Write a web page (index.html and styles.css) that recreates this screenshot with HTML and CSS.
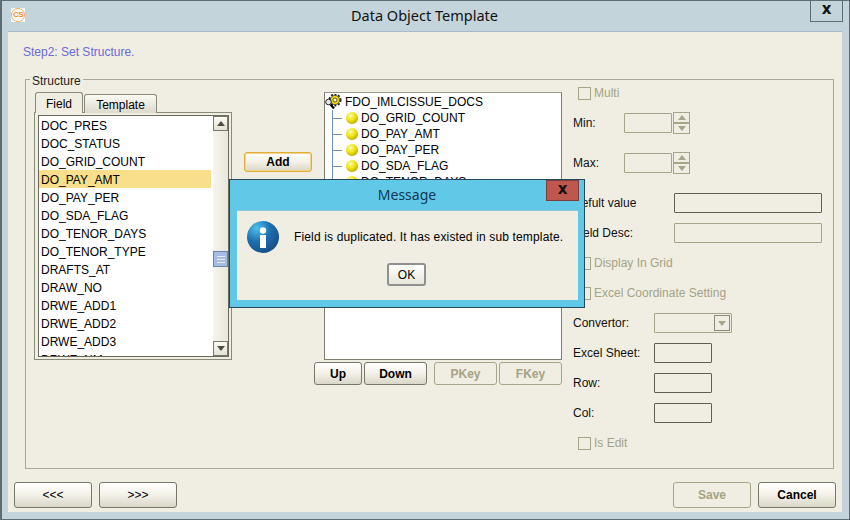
FILE: index.html
```html
<!DOCTYPE html>
<html>
<head>
    <meta charset="utf-8">
    <title>Data Object Template</title>
    <link rel="stylesheet" href="styles.css">
</head>
<body>
    <div class="window">
        <div class="titlebar">
            <span class="logo"><span class="logo-ring">CS</span></span>
            <span class="title">Data Object Template</span>
            <a href="javascript:;" class="close">x</a>
        </div>
        <div class="content">
            <div class="step">Step2: Set Structure.</div>
            <fieldset class="structure">
                <legend><span>Structure</span></legend>
                <div class="columns">
                    <div class="col-fields">
                        <div class="tabs">
                            <span class="tab active">Field</span>
                            <span class="tab">Template</span>
                        </div>
                        <div class="list-frame">
                            <div class="list-inner">
                                <ul class="list">
                                    <li>DOC_PRES</li>
                                    <li>DOC_STATUS</li>
                                    <li>DO_GRID_COUNT</li>
                                    <li class="active">DO_PAY_AMT</li>
                                    <li>DO_PAY_PER</li>
                                    <li>DO_SDA_FLAG</li>
                                    <li>DO_TENOR_DAYS</li>
                                    <li>DO_TENOR_TYPE</li>
                                    <li>DRAFTS_AT</li>
                                    <li>DRAW_NO</li>
                                    <li>DRWE_ADD1</li>
                                    <li>DRWE_ADD2</li>
                                    <li>DRWE_ADD3</li>
                                    <li>DRWE_NM</li>
                                </ul>
                                <div class="scrollbar">
                                    <span class="scroll-btn"><i class="arrow-up"></i></span>
                                    <span class="thumb"><i></i><i></i><i></i></span>
                                    <span class="scroll-btn bottom"><i class="arrow-down"></i></span>
                                </div>
                            </div>
                        </div>
                    </div>
                    <div class="col-add">
                        <button class="btn add">Add</button>
                    </div>
                    <div class="col-tree">
                        <div class="tree">
                            <div class="tree-root">
                                <svg class="gear" width="18" height="16" viewBox="0 0 18 16">
                                    <circle cx="10" cy="6" r="5.6" fill="none" stroke="#222" stroke-width="1.8" stroke-dasharray="2 1.6"/>
                                    <circle cx="10" cy="6" r="4.6" fill="#f4d800" stroke="#3a3a10" stroke-width="0.8"/>
                                    <circle cx="10" cy="6" r="2" fill="#fffbe0" stroke="#333" stroke-width="0.8"/>
                                    <path d="M5.5 10.5l3.5 4" stroke="#000" stroke-width="2.2"/>
                                    <circle cx="3.5" cy="8" r="2.8" fill="#e4ebee" stroke="#222"/>
                                </svg>
                                <span>FDO_IMLCISSUE_DOCS</span>
                            </div>
                            <div class="tree-children">
                                <div class="node"><i class="branch"></i><i class="ball"></i>DO_GRID_COUNT</div>
                                <div class="node"><i class="branch"></i><i class="ball"></i>DO_PAY_AMT</div>
                                <div class="node"><i class="branch"></i><i class="ball"></i>DO_PAY_PER</div>
                                <div class="node"><i class="branch"></i><i class="ball"></i>DO_SDA_FLAG</div>
                                <div class="node"><i class="branch"></i><i class="ball"></i>DO_TENOR_DAYS</div>
                            </div>
                        </div>
                        <div class="tree-actions">
                            <button class="btn up">Up</button>
                            <button class="btn down">Down</button>
                            <button class="btn key off">PKey</button>
                            <button class="btn key off">FKey</button>
                        </div>
                    </div>
                    <div class="col-props">
                        <label class="row check off"><i class="box"></i>Multi</label>
                        <div class="row">
                            <span class="lbl w51">Min:</span>
                            <span class="field off w48"></span>
                            <span class="spinner"><i><b class="arrow-up"></b></i><i><b class="arrow-down"></b></i></span>
                        </div>
                        <div class="row far">
                            <span class="lbl w51">Max:</span>
                            <span class="field off w48"></span>
                            <span class="spinner"><i><b class="arrow-up"></b></i><i><b class="arrow-down"></b></i></span>
                        </div>
                        <div class="row far">
                            <span class="lbl w101">Defult value</span>
                            <span class="field w148"></span>
                        </div>
                        <div class="row">
                            <span class="lbl w101">Field Desc:</span>
                            <span class="field off w148"></span>
                        </div>
                        <label class="row check off"><i class="box"></i>Display In Grid</label>
                        <label class="row check off"><i class="box"></i>Excel Coordinate Setting</label>
                        <div class="row">
                            <span class="lbl w81">Convertor:</span>
                            <span class="field off combo"><i><b class="arrow-down"></b></i></span>
                        </div>
                        <div class="row">
                            <span class="lbl w81">Excel Sheet:</span>
                            <span class="field w58"></span>
                        </div>
                        <div class="row">
                            <span class="lbl w81">Row:</span>
                            <span class="field w58"></span>
                        </div>
                        <div class="row">
                            <span class="lbl w81">Col:</span>
                            <span class="field w58"></span>
                        </div>
                        <label class="row check off"><i class="box"></i>Is Edit</label>
                    </div>
                </div>
            </fieldset>
            <div class="footer">
                <button class="btn nav plain">&lt;&lt;&lt;</button>
                <button class="btn nav plain">&gt;&gt;&gt;</button>
                <span class="spacer"></span>
                <button class="btn nav off">Save</button>
                <button class="btn nav cancel">Cancel</button>
            </div>
        </div>

        <!-- message box -->
        <div class="dialog">
            <div class="dialog-head">
                <span>Message</span>
                <a href="javascript:;" class="dialog-close">x</a>
            </div>
            <div class="dialog-body">
                <div class="dialog-msg">
                    <svg width="32" height="32" viewBox="0 0 32 32">
                        <defs>
                            <radialGradient id="infoFill" cx="30%" cy="22%" r="85%">
                                <stop offset="0" stop-color="#4cc0ee"/>
                                <stop offset="0.5" stop-color="#1f6fae"/>
                                <stop offset="1" stop-color="#154e86"/>
                            </radialGradient>
                        </defs>
                        <circle cx="16" cy="16" r="16" fill="url(#infoFill)"/>
                        <circle cx="16" cy="9.5" r="3.2" fill="#fff"/>
                        <rect x="13" y="14" width="6" height="13" fill="#fff"/>
                    </svg>
                    <span>Field is duplicated. It has existed in sub template.</span>
                </div>
                <button class="ok">OK</button>
            </div>
        </div>
    </div>
</body>
</html>
```
FILE: styles.css
```css
* {
    margin: 0;
    padding: 0;
    box-sizing: border-box;
    list-style: none;
}
body {
    width: 850px;
    height: 520px;
    overflow: hidden;
    font: 12px "Liberation Sans", Arial, sans-serif;
    color: #000;
}
i {
    font-style: normal;
    display: block;
}
.window {
    position: relative;
    width: 850px;
    height: 520px;
    display: flex;
    flex-direction: column;
    background: #c3d5db;
    border: 1px solid #5f6b75;
    border-width: 1px 1px 1px 2px;
}

/* title */
.titlebar {
    position: relative;
    height: 30px;
    flex: none;
    display: flex;
    align-items: center;
    justify-content: center;
    padding: 0 2px 2px 0;
}
.title {
    font: 14.5px "Noto Sans", sans-serif;
    color: #111;
}
.logo {
    position: absolute;
    left: 9px;
    top: 7px;
    width: 14px;
    height: 14px;
    background: #fff;
}
.logo-ring {
    display: block;
    width: 14px;
    height: 14px;
    border: 1.5px solid #f4a657;
    border-radius: 50%;
    color: #f08a24;
    font: bold 8px/11px "Liberation Sans", sans-serif;
    letter-spacing: -.5px;
    text-align: center;
}
.close {
    position: absolute;
    right: 6px;
    top: -1px;
    width: 33px;
    height: 22px;
    border: 1px solid #5f6b75;
    border-top: 0;
    color: #111;
    font: bold 15px/18px "DejaVu Sans", sans-serif;
    text-align: center;
    text-decoration: none;
}

/* body of the window */
.content {
    flex: 1;
    margin: 0 7px 7px 6px;
    padding: 0 8px 0 17px;
    display: flex;
    flex-direction: column;
    background: #f0eee2;
    border-top: 1px solid #a9b8cc;
}
.step {
    height: 26px;
    margin-left: -2px;
    padding-top: 13px;
    line-height: 14px;
    color: #6a6ad8;
}
.structure {
    height: 397px;
    margin-top: 14px;
    padding: 0 8px;
    border: 1px solid #a8a89a;
    min-width: 0;
}
.structure legend {
    margin-left: -4px;
    padding: 0 2px;
    line-height: 14px;
    color: #222;
}
.structure legend span {
    position: relative;
    top: 2px;
}
.columns {
    display: flex;
    margin-top: -1px;
}
.col-fields {
    width: 198px;
    margin-top: 7px;
}
.col-add {
    width: 68px;
    margin: 67px 12px 0;
}
.col-tree {
    width: 238px;
    margin: 7px 11px 0 0;
}
.col-props {
    flex: 1;
    display: flex;
    flex-direction: column;
    gap: 10px;
    margin-top: -2px;
}

/* tabs */
.tabs {
    display: flex;
    align-items: flex-end;
    height: 21px;
    margin: 0 0 -1px 1px;
    position: relative;
}
.tab {
    height: 19px;
    width: 73px;
    margin-left: 1px;
    border: 1px solid #8a8a78;
    border-bottom: 0;
    border-radius: 3px 3px 0 0;
    background: linear-gradient(#fbfaf5, #dcdacb);
    text-align: center;
    line-height: 20px;
}
.tab.active {
    height: 21px;
    width: 48px;
    margin-left: 0;
    background: #f0eee2;
    line-height: 22px;
}

/* field list */
.list-frame {
    height: 248px;
    padding: 2px 2px 2px 3px;
    border: 1px solid #8a8a78;
}
.list-inner {
    height: 100%;
    display: flex;
    overflow: hidden;
    background: #fff;
    border: 1px solid #6b6b5d;
}
.list {
    flex: 1;
    padding: 0;
    overflow: hidden;
}
.list li {
    height: 18px;
    line-height: 20px;
    padding-left: 2px;
    margin-right: 2px;
}
.list li.active {
    background: #f9df8c;
}
.scrollbar {
    width: 15px;
    display: flex;
    flex-direction: column;
    background: linear-gradient(90deg, #f6f5ee, #e9e7da);
}
.scroll-btn {
    height: 15px;
    display: flex;
    align-items: center;
    justify-content: center;
    border: 1px solid #77776a;
    background: linear-gradient(#fbfaf5, #e4e2d4);
}
.scroll-btn.bottom {
    margin-top: auto;
}
.thumb {
    height: 16px;
    margin-top: 120px;
    display: flex;
    flex-direction: column;
    align-items: center;
    justify-content: center;
    gap: 2px;
    border: 1px solid #6f83a8;
    background: #a3bde4;
}
.thumb i {
    width: 8px;
    height: 1px;
    background: #e6eefa;
}
.arrow-up, .arrow-down {
    display: block;
    width: 0;
    height: 0;
    border-left: 4px solid transparent;
    border-right: 4px solid transparent;
}
.arrow-up {
    border-bottom: 5px solid #4d4d42;
}
.arrow-down {
    border-top: 5px solid #4d4d42;
}

/* buttons */
.btn {
    font: bold 12px "Liberation Sans", sans-serif;
    color: #000;
    border: 1px solid #77776a;
    border-radius: 3px;
    background: linear-gradient(#ffffff, #f3f1e8 50%, #d9d7c7);
}
.btn.off {
    color: #a3a385;
    border-color: #a5a588;
    background: #f0eee2;
}
.btn.add {
    width: 68px;
    height: 20px;
    border-color: #e0ac3a;
    box-shadow: inset 0 0 0 1px #f3d488;
}
.btn.plain {
    font-weight: normal;
}
.tree-actions {
    display: flex;
    margin: 2px 0 0 -10px;
}
.tree-actions .btn {
    flex: none;
    height: 23px;
}
.up {
    width: 48px;
    margin-right: 2px;
}
.down {
    width: 63px;
    margin-right: 7px;
}
.key {
    width: 63px;
}
.key + .key {
    margin-left: 2px;
}

/* tree */
.tree {
    height: 268px;
    padding-top: 1px;
    background: #fff;
    border: 1px solid #7f7f70;
    border-top-color: #9a9a8c;
    overflow: hidden;
}
.tree-root {
    height: 16px;
    display: flex;
    align-items: center;
    gap: 2px;
}
.gear {
    flex: none;
}
.tree-children {
    margin-left: 7px;
    padding-bottom: 90px;
    border-left: 1px solid #6f8fb5;
}
.node {
    height: 16px;
    display: flex;
    align-items: center;
}
.branch {
    width: 9px;
    height: 1px;
    background: #6f8fb5;
}
.ball {
    width: 12px;
    height: 12px;
    margin: 0 3px 0 4px;
    border-radius: 50%;
    background: radial-gradient(circle at 38% 32%, #fffbb0, #eee000 45%, #8f8500);
}

/* property column */
.row {
    height: 20px;
    display: flex;
    align-items: center;
    flex: none;
}
.row.far {
    margin-top: 10px;
}
.lbl {
    flex: none;
    color: #111;
}
.w51 { width: 51px; }
.w81 { width: 81px; }
.w101 { width: 101px; }
.field {
    display: block;
    height: 20px;
    border: 1px solid #5f5f52;
    border-radius: 1px;
}
.field.off {
    border-color: #a5a588;
}
.w48 { width: 48px; }
.w58 { width: 58px; }
.w148 { width: 148px; }
.spinner {
    margin-left: 1px;
    width: 17px;
    display: flex;
    flex-direction: column;
}
.spinner i {
    height: 11px;
    display: flex;
    align-items: center;
    justify-content: center;
    border: 1px solid #a5a588;
}
.spinner b, .combo b {
    border-left-width: 4px;
    border-right-width: 4px;
    border-top-color: #a5a588;
    border-bottom-color: #a5a588;
}
.combo {
    width: 78px;
    display: flex;
    justify-content: flex-end;
    align-items: center;
    padding-right: 1px;
}
.combo i {
    width: 16px;
    height: 16px;
    display: flex;
    align-items: center;
    justify-content: center;
    border: 1px solid #8a8a78;
}
.check {
    padding-left: 5px;
    gap: 3px;
}
.check.off {
    color: #a3a385;
}
.box {
    width: 13px;
    height: 13px;
    border: 1px solid #a5a588;
}

/* bottom buttons */
.footer {
    display: flex;
    gap: 7px;
    margin: 13px -2px 0 -11px;
}
.nav {
    width: 78px;
    height: 26px;
}
.spacer {
    flex: 1;
}

/* message box */
.dialog {
    position: absolute;
    left: 227px;
    top: 178px;
    width: 356px;
    height: 129px;
    background: #62c8e8;
    border: 1px solid #27485a;
    display: flex;
    flex-direction: column;
}
.dialog-head {
    position: relative;
    height: 30px;
    flex: none;
    text-align: center;
    font: 14px/29px "Noto Sans", sans-serif;
    color: #0f3a55;
}
.dialog-close {
    position: absolute;
    right: 5px;
    top: 0;
    width: 33px;
    height: 21px;
    background: #c0574f;
    border: 1px solid #7a3f3c;
    color: #111;
    font: bold 15px/17px "DejaVu Sans", sans-serif;
    text-decoration: none;
}
.dialog-body {
    flex: 1;
    margin: 0 6px 7px 7px;
    padding: 10px 10px 0;
    background: #f0eee2;
    border-top: 1px solid #8fc6d8;
    display: flex;
    flex-direction: column;
    align-items: center;
}
.dialog-msg {
    width: 100%;
    display: flex;
    align-items: center;
    gap: 15px;
    letter-spacing: .15px;
}
.ok {
    width: 39px;
    height: 23px;
    margin: 10px 2px 0 0;
    font: 12px "Liberation Sans", sans-serif;
    border: 2px solid #8f9190;
    border-radius: 3px;
    background: linear-gradient(#ffffff, #e8e6d8);
}
```
